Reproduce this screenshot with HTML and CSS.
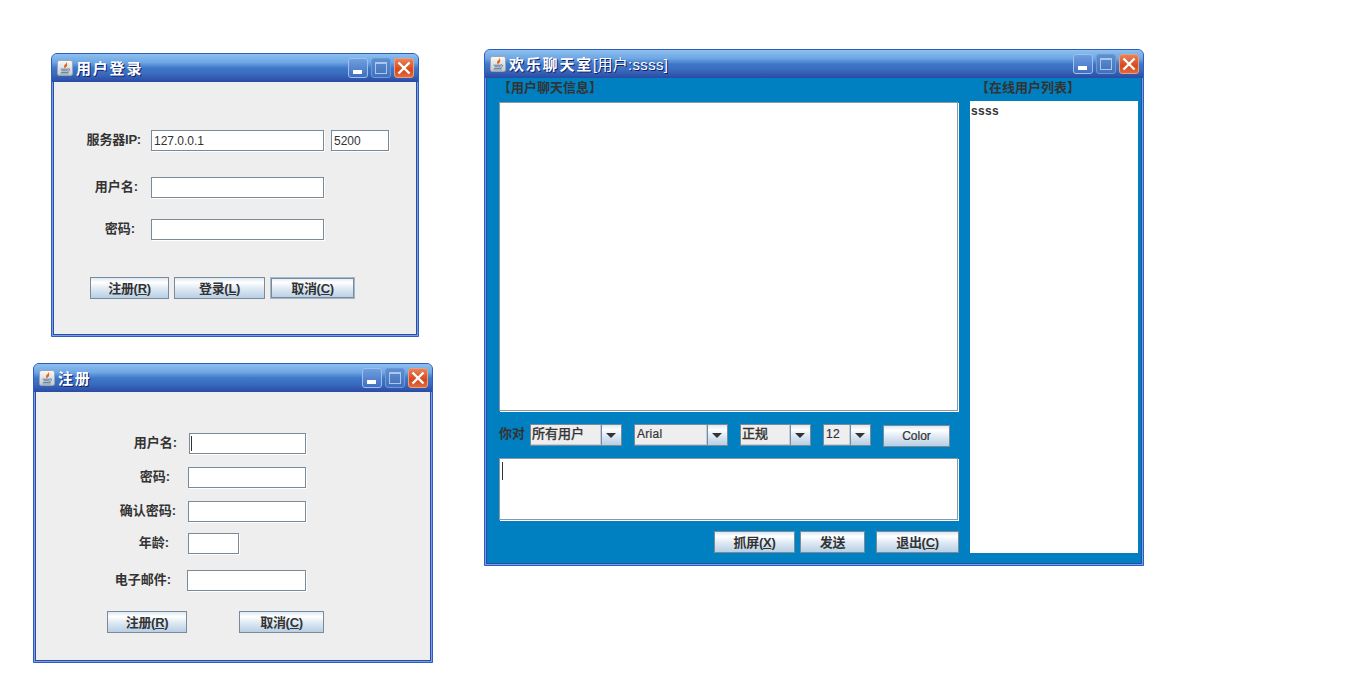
FILE: index.html
```html
<!DOCTYPE html>
<html lang="zh-CN">
<head>
    <meta charset="UTF-8">
    <title>欢乐聊天室</title>
    <link rel="stylesheet" href="styles.css">
</head>
<body>
    <svg class="defs" width="0" height="0">
        <defs>
            <linearGradient id="iconBg" x1="0" y1="0" x2="0" y2="1">
                <stop offset="0" stop-color="#fafafa"/>
                <stop offset="1" stop-color="#c4c8cc"/>
            </linearGradient>
            <symbol id="javaIcon" viewBox="0 0 16 16">
                <rect x="0.5" y="0.5" width="15" height="15" rx="2" fill="url(#iconBg)" stroke="#9aa6b4"/>
                <path d="M9.5 1.5C10.5 3.5 7 4.5 7 6.5c0 1 .8 1.5 1 2-.1-1 2.6-2 2.2-3.8C10 3.6 10.3 2.6 9.5 1.5z" fill="#e2641c"/>
                <path d="M3.5 9.2h7.5M4.5 10.8h6M4 12.6h7.5" stroke="#5f7f9f" fill="none"/>
                <path d="M11 8.8c2.2-.4 2.4 2-.4 2.6" stroke="#5f7f9f" fill="none"/>
                <path d="M3 14h9" stroke="#8aa0b6" fill="none"/>
            </symbol>
        </defs>
    </svg>

    <!-- 登录 -->
    <div class="window login-window">
        <div class="title-bar">
            <svg class="title-icon"><use href="#javaIcon"/></svg>
            <span class="title-text">用户登录</span>
            <span class="win-btn win-min"><i></i></span>
            <span class="win-btn win-max"><i></i></span>
            <span class="win-btn win-close"><svg width="20" height="20"><path d="M4.5 4.5l11 11M15.5 4.5l-11 11" stroke="#fff" stroke-width="2.4"/></svg></span>
        </div>
        <div class="window-body">
            <div class="form-row">
                <label class="field-label lbl-ip">服务器IP:</label>
                <input class="field w-173" type="text" value="127.0.0.1">
                <input class="field port-field" type="text" value="5200">
            </div>
            <div class="form-row gap-26">
                <label class="field-label lbl-user">用户名:</label>
                <input class="field w-173" type="text">
            </div>
            <div class="form-row gap-21">
                <label class="field-label lbl-pass">密码:</label>
                <input class="field w-173" type="password">
            </div>
            <div class="button-row login-buttons">
                <button class="btn btn-reg">注册(<u>R</u>)</button>
                <button class="btn btn-login">登录(<u>L</u>)</button>
                <button class="btn btn-cancel btn-focus">取消(<u>C</u>)</button>
            </div>
        </div>
    </div>

    <!-- 注册 -->
    <div class="window register-window">
        <div class="title-bar">
            <svg class="title-icon"><use href="#javaIcon"/></svg>
            <span class="title-text">注册</span>
            <span class="win-btn win-min"><i></i></span>
            <span class="win-btn win-max"><i></i></span>
            <span class="win-btn win-close"><svg width="20" height="20"><path d="M4.5 4.5l11 11M15.5 4.5l-11 11" stroke="#fff" stroke-width="2.4"/></svg></span>
        </div>
        <div class="window-body">
            <div class="form-row">
                <label class="field-label reg-user">用户名:</label>
                <input class="field has-caret w-117" type="text">
            </div>
            <div class="form-row gap-13">
                <label class="field-label reg-pass">密码:</label>
                <input class="field w-118" type="password">
            </div>
            <div class="form-row gap-13">
                <label class="field-label reg-confirm">确认密码:</label>
                <input class="field w-118" type="password">
            </div>
            <div class="form-row gap-11">
                <label class="field-label reg-age">年龄:</label>
                <input class="field w-51" type="text">
            </div>
            <div class="form-row gap-16">
                <label class="field-label reg-mail">电子邮件:</label>
                <input class="field w-119" type="text">
            </div>
            <div class="button-row register-buttons">
                <button class="btn btn-ok">注册(<u>R</u>)</button>
                <button class="btn btn-back">取消(<u>C</u>)</button>
            </div>
        </div>
    </div>

    <!-- 聊天室 -->
    <div class="window chat-window">
        <div class="title-bar">
            <svg class="title-icon"><use href="#javaIcon"/></svg>
            <span class="title-text">欢乐聊天室<span class="title-user">[用户:ssss]</span></span>
            <span class="win-btn win-min"><i></i></span>
            <span class="win-btn win-max"><i></i></span>
            <span class="win-btn win-close"><svg width="20" height="20"><path d="M4.5 4.5l11 11M15.5 4.5l-11 11" stroke="#fff" stroke-width="2.4"/></svg></span>
        </div>
        <div class="window-body chat-body">
            <div class="chat-left">
                <div class="panel-title left-title">【用户聊天信息】</div>
                <div class="text-box message-box"></div>
                <div class="tool-row">
                    <span class="to-label">你对</span>
                    <div class="combo combo-user"><span class="combo-value cjk-value">所有用户</span><span class="combo-arrow"></span></div>
                    <div class="combo combo-font"><span class="combo-value">Arial</span><span class="combo-arrow"></span></div>
                    <div class="combo combo-style"><span class="combo-value cjk-value">正规</span><span class="combo-arrow"></span></div>
                    <div class="combo combo-size"><span class="combo-value">12</span><span class="combo-arrow"></span></div>
                    <button class="btn btn-color">Color</button>
                </div>
                <div class="text-box input-box"></div>
                <div class="button-row chat-buttons">
                    <button class="btn btn-shot">抓屏(<u>X</u>)</button>
                    <button class="btn btn-send">发送</button>
                    <button class="btn btn-quit">退出(<u>C</u>)</button>
                </div>
            </div>
            <div class="chat-right">
                <div class="panel-title right-title">【在线用户列表】</div>
                <div class="user-list">ssss</div>
            </div>
        </div>
    </div>
</body>
</html>
```

FILE: styles.css
```css
* { box-sizing: border-box; }
body { margin: 0; height: 690px; background: #fff; position: relative; overflow: hidden; font-family: "Liberation Sans", "Noto Sans CJK SC", sans-serif; font-size: 13px; color: #333; }
.defs { position: absolute; }

/* 窗口 */
.window { position: absolute; display: flex; flex-direction: column; padding: 0 1px 1px; border: 1px solid #2f5cc0; border-radius: 6px 6px 0 0; background: #7aa0e4; }
.login-window { left: 51px; top: 53px; width: 368px; height: 284px; }
.register-window { left: 33px; top: 363px; width: 400px; height: 300px; }
.chat-window { left: 484px; top: 49px; width: 660px; height: 517px; }

.title-bar { height: 28px; flex: none; display: flex; align-items: center; margin: 0 -1px; padding: 0 4px 0 5px; border-radius: 5px 5px 0 0; background: linear-gradient(#8cc0ef 0, #6fa6e4 30%, #3f78c8 50%, #3a6cbe 70%, #2a4ba6 100%); }
.title-icon { width: 16px; height: 16px; flex: none; margin-right: 3px; }
.title-text { flex: 1; padding-bottom: 2px; font-size: 15px; font-weight: bold; letter-spacing: 1.8px; color: #fff; text-shadow: 1px 1px 0 #10206a; white-space: nowrap; }
.title-user { font-size: 15px; font-weight: normal; letter-spacing: 0.3px; }

.win-btn { width: 20px; height: 20px; flex: none; margin-left: 3px; border: 1px solid #9fc0ea; border-radius: 3px; position: relative; overflow: hidden; }
.win-min { background: linear-gradient(#6e9fe0, #3f6fc0); }
.win-min i { position: absolute; left: 4px; bottom: 3px; width: 9px; height: 4px; background: #fff; }
.win-max { background: linear-gradient(#5f8fd0, #4170bc); border-color: #6f97d4; }
.win-max i { position: absolute; left: 3px; top: 3px; width: 12px; height: 12px; border: 1px solid #a8c8f0; border-top-width: 2px; }
.win-close { background: linear-gradient(#e8825a, #d8481c 60%, #e06a3c); border-color: #e8a080; }
.win-close svg { display: block; margin: -1px; }

.window-body { flex: 1; background: #eee; border: solid #2a4ba6; border-width: 0 1px 1px; }
.login-window .window-body { padding: 48px 0 0; }
.register-window .window-body { padding: 41px 0 0; }

/* 表单 */
.form-row { display: flex; height: 21px; align-items: center; }
.gap-11 { margin-top: 11px; }
.gap-13 { margin-top: 13px; }
.gap-16 { margin-top: 16px; }
.gap-21 { margin-top: 21px; }
.gap-26 { margin-top: 26px; }

.field-label { flex: none; padding-bottom: 4px; text-align: right; font-weight: bold; white-space: nowrap; }
.lbl-ip { width: 87px; margin-right: 10px; letter-spacing: -0.2px; }
.lbl-user { width: 84px; margin-right: 13px; }
.lbl-pass { width: 81px; margin-right: 16px; }

.reg-user { width: 141px; margin-right: 12px; }
.reg-pass { width: 134px; margin-right: 18px; }
.reg-confirm { width: 140px; margin-right: 12px; }
.reg-age { width: 133px; margin-right: 19px; }
.reg-mail { width: 135px; margin-right: 16px; }

.field { height: 21px; padding: 0 2px; border: 1px solid #7a8a99; box-shadow: 1px 1px 0 #fff; background: #fff; font: 12px "Liberation Sans", sans-serif; color: #333; outline: none; border-radius: 0; }
.has-caret { background: linear-gradient(#333, #333) no-repeat 1px 2px / 1px 15px #fff; }
.w-173 { width: 173px; }
.w-117 { width: 117px; }
.w-118 { width: 118px; }
.w-119 { width: 119px; }
.w-51 { width: 51px; }
.port-field { width: 58px; margin-left: 7px; }

/* 按钮 */
.button-row { display: flex; height: 22px; }
.login-buttons { margin-top: 37px; padding-left: 36px; gap: 5px; }
.register-buttons { margin-top: 20px; padding-left: 71px; gap: 52px; }
.chat-buttons { margin-top: 11px; padding-left: 215px; gap: 5px; }

.btn { height: 22px; padding: 0 0 4px; border: 1px solid #7a8a99; border-radius: 0; background: linear-gradient(#dde8f3 0, #fff 22%, #dde8f3 55%, #b8cfe5 100%); font: bold 13px "Liberation Sans", "Noto Sans CJK SC", sans-serif; letter-spacing: -0.3px; color: #333; }
.btn u { text-decoration: underline; }
.btn-focus { border-color: #a3b8cc; box-shadow: inset 0 0 0 1px #7a8a99; }
.btn-reg { width: 79px; }
.btn-login { width: 91px; }
.btn-cancel { width: 85px; }
.btn-ok { width: 80px; }
.btn-back { width: 85px; }
.btn-shot { width: 81px; }
.btn-send { width: 65px; }
.btn-quit { width: 83px; margin-left: 6px; }
.btn-color { width: 67px; margin-top: 1px; padding: 0; font: 12px "Liberation Sans", sans-serif; letter-spacing: 0; -webkit-text-stroke: 0.2px #333; }

/* 聊天室 */
.chat-body { display: flex; padding: 0 3px 0 12px; gap: 11px; background: #0080c0; }
.chat-left { width: 460px; flex: none; }
.chat-right { width: 168px; flex: none; }
.panel-title { font-weight: bold; white-space: nowrap; line-height: 19px; }
.left-title { height: 24px; margin-left: -1px; }
.right-title { height: 23px; padding-left: 6px; }

.text-box { width: 459px; background: #fff; border: 1px solid #8a98a6; box-shadow: 1px 1px 0 #fff; }
.message-box { height: 309px; }
.input-box { height: 62px; background: linear-gradient(#333, #333) no-repeat 2px 3px / 1px 18px #fff; }
.tool-row { display: flex; height: 23px; margin: 13px 0 11px; gap: 12px; }
.to-label { width: 31px; margin-right: -12px; line-height: 19px; font-weight: bold; white-space: nowrap; }
.user-list { height: 452px; background: #fff; padding: 3px 1px; font: bold 12px/15px "Liberation Sans", sans-serif; letter-spacing: 0.3px; }

.combo { height: 22px; display: flex; border: 1px solid #7a8a99; background: #eee; }
.combo-user { width: 92px; }
.combo-font { width: 94px; }
.combo-style { width: 71px; }
.combo-size { width: 48px; }
.combo-value { flex: 1; padding-left: 2px; border: solid #b8cfe5; border-width: 0 1px 1px 0; font-size: 12px; letter-spacing: 0.3px; line-height: 19px; white-space: nowrap; overflow: hidden; -webkit-text-stroke: 0.2px #333; }
.cjk-value { padding-left: 1px; font-size: 13px; letter-spacing: 0; line-height: 17px; -webkit-text-stroke: 0.4px #333; }
.combo-arrow { width: 19px; flex: none; position: relative; border-left: 1px solid #7a8a99; background: linear-gradient(#dde8f3 0, #fff 22%, #dde8f3 55%, #b8cfe5 100%); box-sizing: content-box; }
.combo-arrow::after { content: ""; position: absolute; left: 4px; top: 8px; border: solid transparent; border-width: 5px 5.5px 0; border-top-color: #333; }
```
